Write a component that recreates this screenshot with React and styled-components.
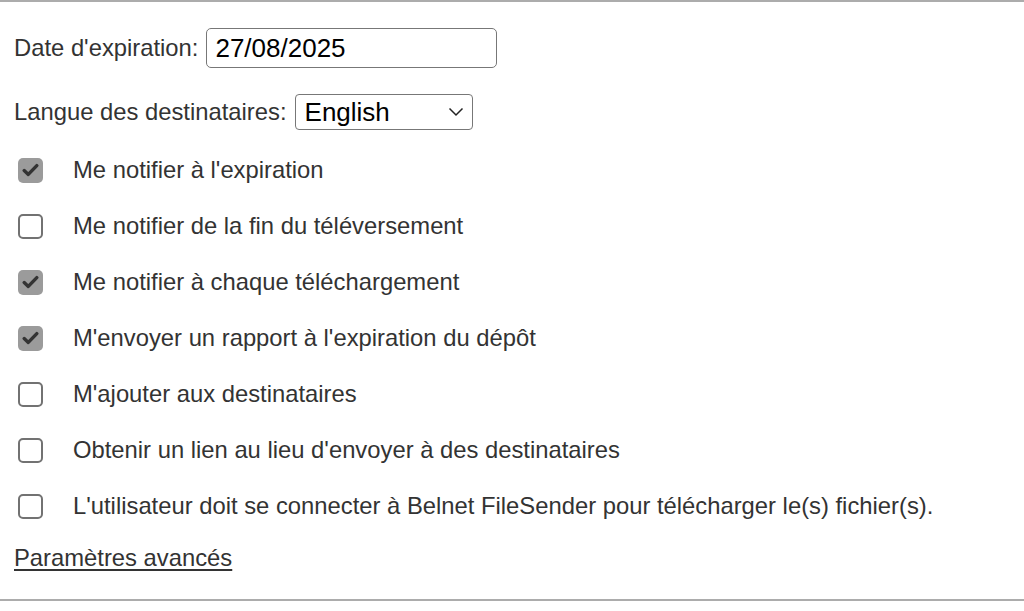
import React, { useState } from 'react';
import styled, { createGlobalStyle } from 'styled-components';

const GlobalStyle = createGlobalStyle`
  html, body {
    margin: 0;
    padding: 0;
    background: #ffffff;
  }
  body {
    font-family: "Liberation Sans", Arial, Helvetica, sans-serif;
  }
`;

const Panel = styled.section`
  box-sizing: border-box;
  width: 1024px;
  height: 601px;
  border-top: 2px solid #acacac;
  border-bottom: 2px solid #acacac;
  padding: 26px 14px 0 14px;
  display: flex;
  flex-direction: column;
  color: #333333;
  font-size: 23.8px;
`;

const FieldRow = styled.div`
  display: flex;
  align-items: center;
  height: ${({ $height }) => $height}px;
  margin-bottom: ${({ $gap }) => $gap}px;
`;

const Label = styled.label`
  margin-right: 8px;
  white-space: nowrap;
`;

const DateInput = styled.input`
  box-sizing: border-box;
  width: 291px;
  height: 40px;
  border: 1.5px solid #777777;
  border-radius: 5px;
  padding: 0 0 0 8px;
  font-family: inherit;
  font-size: 26px;
  color: #000000;
  outline: none;
`;

const SelectWrap = styled.div`
  position: relative;
  width: 178px;
  height: 36px;
`;

const Select = styled.select`
  box-sizing: border-box;
  appearance: none;
  width: 100%;
  height: 100%;
  border: 1.5px solid #777777;
  border-radius: 4px;
  background: #ffffff;
  padding: 0 0 0 9px;
  font-family: inherit;
  font-size: 26px;
  color: #000000;
  outline: none;
`;

const Chevron = styled.svg`
  position: absolute;
  right: 9px;
  top: 13px;
  width: 16px;
  height: 10px;
  pointer-events: none;
`;

const CheckRow = styled.label`
  display: flex;
  align-items: center;
  height: 56px;
  cursor: pointer;
`;

const Box = styled.span`
  box-sizing: border-box;
  flex: 0 0 auto;
  width: 25px;
  height: 25px;
  margin-left: 4px;
  margin-right: 30px;
  border-radius: 5px;
  display: flex;
  align-items: center;
  justify-content: center;
  border: ${({ $checked }) => ($checked ? 'none' : '2px solid #727272')};
  background: ${({ $checked }) => ($checked ? '#9b9b9b' : '#ffffff')};
`;

const HiddenInput = styled.input`
  display: none;
`;

const LinkRow = styled.div`
  display: flex;
  align-items: center;
  height: 48px;
`;

const Advanced = styled.a`
  color: #333333;
  text-decoration: underline;
  text-underline-offset: 3px;
  cursor: pointer;
`;

const options = [
  { label: "Me notifier à l'expiration", checked: true },
  { label: 'Me notifier de la fin du téléversement', checked: false },
  { label: 'Me notifier à chaque téléchargement', checked: true },
  { label: "M'envoyer un rapport à l'expiration du dépôt", checked: true },
  { label: "M'ajouter aux destinataires", checked: false },
  { label: "Obtenir un lien au lieu d'envoyer à des destinataires", checked: false },
  { label: "L'utilisateur doit se connecter à Belnet FileSender pour télécharger le(s) fichier(s).", checked: false },
];

const Check = () => (
  <svg width="17" height="14" viewBox="0 0 17 14">
    <path d="M2.2 7.6 L6.3 11.4 L14.8 2.6" fill="none" stroke="#333333" strokeWidth="3.4" strokeLinecap="round" strokeLinejoin="round" />
  </svg>
);

const Option = ({ label, checked, onToggle }) => (
  <CheckRow>
    <HiddenInput type="checkbox" checked={checked} onChange={onToggle} />
    <Box $checked={checked}>{checked && <Check />}</Box>
    <span>{label}</span>
  </CheckRow>
);

const App = () => {
  const [state, setState] = useState(options.map((o) => o.checked));

  const toggle = (i) => setState((s) => s.map((v, j) => (j === i ? !v : v)));

  return (
    <>
      <GlobalStyle />
      <Panel>
        <FieldRow $height={40} $gap={26}>
          <Label htmlFor="expiry">Date d'expiration:</Label>
          <DateInput id="expiry" type="text" defaultValue="27/08/2025" />
        </FieldRow>
        <FieldRow $height={36} $gap={12}>
          <Label htmlFor="lang">Langue des destinataires:</Label>
          <SelectWrap>
            <Select id="lang" defaultValue="en">
              <option value="en">English</option>
              <option value="fr">Français</option>
              <option value="nl">Nederlands</option>
            </Select>
            <Chevron viewBox="0 0 16 10">
              <path d="M1.5 1.5 L8 8 L14.5 1.5" fill="none" stroke="#222222" strokeWidth="1.5" />
            </Chevron>
          </SelectWrap>
        </FieldRow>
        {options.map((o, i) => (
          <Option key={o.label} label={o.label} checked={state[i]} onToggle={() => toggle(i)} />
        ))}
        <LinkRow>
          <Advanced>Paramètres avancés</Advanced>
        </LinkRow>
      </Panel>
    </>
  );
};

export default App;
